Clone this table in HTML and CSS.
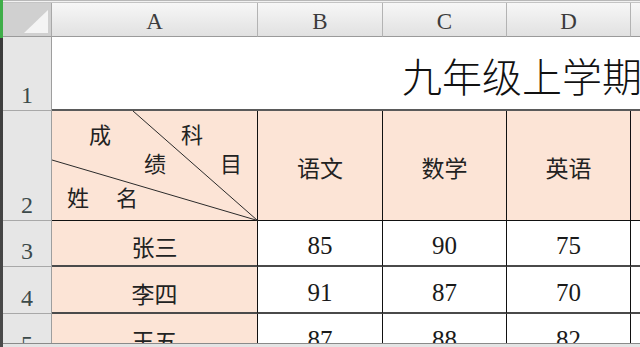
FILE: index.html
```html
<!DOCTYPE html>
<html lang="zh">
<head>
<meta charset="utf-8">
<title>成绩表</title>
<link rel="stylesheet" href="styles.css">
</head>
<body>
<div class="window">
  <div class="edge"></div>
  <div class="main">
    <div class="topline"></div>
    <div class="sheet">
      <div class="corner"><span class="tri"></span></div>
      <div class="colhead">A</div>
      <div class="colhead">B</div>
      <div class="colhead">C</div>
      <div class="colhead">D</div>
      <div class="colhead last"></div>

      <div class="rowhead">1</div>
      <div class="title-cell"><span class="title">九年级上学期期末成绩表</span></div>

      <div class="rowhead">2</div>
      <div class="cell peach diag">
        <svg class="diag-lines" width="206" height="110" viewBox="0 0 206 110">
          <line x1="81" y1="0" x2="205.5" y2="109.5" stroke="#2a2a2a" stroke-width="1"/>
          <line x1="0" y1="49" x2="205.5" y2="109.5" stroke="#2a2a2a" stroke-width="1"/>
        </svg>
        <span class="lbl l-cheng">成</span>
        <span class="lbl l-ke">科</span>
        <span class="lbl l-ji">绩</span>
        <span class="lbl l-mu">目</span>
        <span class="lbl l-xing">姓</span>
        <span class="lbl l-ming">名</span>
      </div>
      <div class="cell peach subj">语文</div>
      <div class="cell peach subj">数学</div>
      <div class="cell peach subj">英语</div>
      <div class="cell peach subj last"></div>

      <div class="rowhead">3</div>
      <div class="cell peach name thick">张三</div>
      <div class="cell num thick">85</div>
      <div class="cell num thick">90</div>
      <div class="cell num thick">75</div>
      <div class="cell num thick last"></div>

      <div class="rowhead">4</div>
      <div class="cell peach name thick">李四</div>
      <div class="cell num thick">91</div>
      <div class="cell num thick">87</div>
      <div class="cell num thick">70</div>
      <div class="cell num thick last"></div>

      <div class="rowhead">5</div>
      <div class="cell peach name">王五</div>
      <div class="cell num">87</div>
      <div class="cell num">88</div>
      <div class="cell num">82</div>
      <div class="cell num last"></div>
    </div>
  </div>
  <div class="tabbar"></div>
</div>
</body>
</html>
```

FILE: styles.css
```css
* { box-sizing: border-box; }
html, body { margin: 0; padding: 0; }
body {
  width: 640px;
  height: 347px;
  overflow: hidden;
  background: #ffffff;
  font-family: "Noto Sans CJK SC", "Noto Sans", sans-serif;
}
.window {
  position: relative;
  width: 640px;
  height: 347px;
  display: flex;
  overflow: hidden;
}
.edge {
  width: 3px;
  flex: none;
  background: linear-gradient(to bottom, #3fae49 0, #3fae49 38px, #3b3b3b 38px, #4a4a4a 100%);
}
.main {
  flex: 1;
  display: flex;
  flex-direction: column;
  overflow: hidden;
}
.topline {
  height: 3px;
  flex: none;
  background: #f2f2f2;
  border-top: 1px solid #b8b8b8;
  border-bottom: 1px solid #c4c4c4;
}
.sheet {
  display: grid;
  grid-template-columns: 49px 206px 125px 124px 124px 60px;
  grid-template-rows: 34px 74px 110px 46px 47px 46px;
  overflow: hidden;
}
.corner {
  position: relative;
  background: #d0d0d0;
  border-right: 1px solid #a8a8a8;
  border-bottom: 1px solid #9a9a9a;
}
.tri {
  position: absolute;
  right: 3px;
  bottom: 3px;
  width: 0;
  height: 0;
  border-left: 24px solid transparent;
  border-bottom: 23px solid #f4f4f4;
}
.colhead {
  display: flex;
  align-items: center;
  justify-content: center;
  padding-top: 4px;
  background: linear-gradient(to bottom, #f7f7f7, #e1e1e1);
  border-right: 1px solid #b3b3b3;
  border-bottom: 1px solid #9a9a9a;
  font-family: "Liberation Serif", serif;
  font-size: 23px;
  color: #3c3c3c;
}
.rowhead {
  display: flex;
  align-items: flex-end;
  justify-content: center;
  padding-bottom: 3px;
  background: #e6e6e6;
  border-right: 1px solid #9e9e9e;
  border-bottom: 1px solid #a8a8a8;
  font-family: "Liberation Serif", serif;
  font-size: 24px;
  line-height: 1;
  color: #3c4a4a;
}
.title-cell {
  grid-column: span 5;
  display: flex;
  align-items: center;
  padding-left: 350px;
  padding-top: 4px;
  background: #ffffff;
  border-bottom: 2px solid #5a5a5a;
  overflow: hidden;
  white-space: nowrap;
}
.title {
  font-family: "Noto Sans CJK SC", sans-serif;
  font-weight: 300;
  font-size: 40px;
  line-height: 1;
  color: #111111;
}
.cell {
  display: flex;
  align-items: center;
  justify-content: center;
  border-right: 1px solid #111111;
  border-bottom: 1px solid #111111;
  background: #ffffff;
  overflow: hidden;
  white-space: nowrap;
}
.cell.thick { border-bottom: 2px solid #4a4a4a; }
.cell.last { border-right: none; }
.peach { background: #fce4d6; }
.subj {
  font-size: 23px;
  color: #222222;
  padding-top: 2px;
}
.name {
  font-size: 23px;
  color: #222222;
  padding-top: 6px;
}
.num {
  font-family: "Liberation Serif", serif;
  font-size: 25px;
  color: #1a1a1a;
  padding-top: 6px;
}
.diag {
  position: relative;
  display: block;
  overflow: visible;
}
.diag-lines {
  position: absolute;
  left: 0;
  top: 0;
  overflow: visible;
}
.lbl {
  position: absolute;
  font-size: 22px;
  line-height: 22px;
  color: #222222;
}
.l-cheng { left: 37px; top: 11px; }
.l-ke { left: 129px; top: 11px; }
.l-ji { left: 92px; top: 40px; }
.l-mu { left: 168px; top: 40px; }
.l-xing { left: 15px; top: 74px; }
.l-ming { left: 64px; top: 74px; }
.tabbar {
  position: absolute;
  left: 3px;
  right: 0;
  bottom: 0;
  height: 4px;
  background: #e4e4e4;
  border-top: 1px solid #8a8a8a;
}
```
